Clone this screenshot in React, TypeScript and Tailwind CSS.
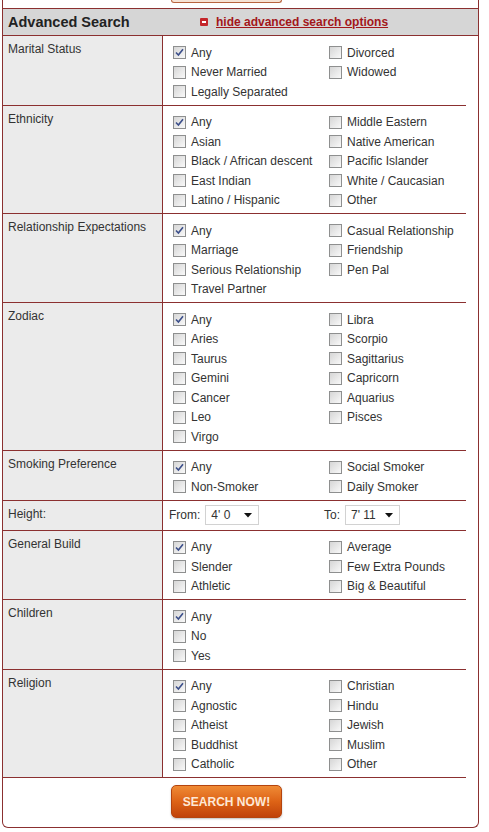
import React from 'react'

// options listed in visual order: left column first, then right column
const rows: { label: string; left: string[]; right: string[] }[] = [
  { label: 'Marital Status', left: ['Any', 'Never Married', 'Legally Separated'], right: ['Divorced', 'Widowed'] },
  {
    label: 'Ethnicity',
    left: ['Any', 'Asian', 'Black / African descent', 'East Indian', 'Latino / Hispanic'],
    right: ['Middle Eastern', 'Native American', 'Pacific Islander', 'White / Caucasian', 'Other'],
  },
  {
    label: 'Relationship Expectations',
    left: ['Any', 'Marriage', 'Serious Relationship', 'Travel Partner'],
    right: ['Casual Relationship', 'Friendship', 'Pen Pal'],
  },
  {
    label: 'Zodiac',
    left: ['Any', 'Aries', 'Taurus', 'Gemini', 'Cancer', 'Leo', 'Virgo'],
    right: ['Libra', 'Scorpio', 'Sagittarius', 'Capricorn', 'Aquarius', 'Pisces'],
  },
  { label: 'Smoking Preference', left: ['Any', 'Non-Smoker'], right: ['Social Smoker', 'Daily Smoker'] },
]

const rows2: { label: string; left: string[]; right: string[] }[] = [
  { label: 'General Build', left: ['Any', 'Slender', 'Athletic'], right: ['Average', 'Few Extra Pounds', 'Big & Beautiful'] },
  { label: 'Children', left: ['Any', 'No', 'Yes'], right: [] },
  {
    label: 'Religion',
    left: ['Any', 'Agnostic', 'Atheist', 'Buddhist', 'Catholic'],
    right: ['Christian', 'Hindu', 'Jewish', 'Muslim', 'Other'],
  },
]

function Checkbox({ checked }: { checked?: boolean }) {
  return (
    <span className="relative flex h-[13px] w-[13px] shrink-0 items-center justify-center border border-[#8e8f8f] bg-gradient-to-br from-[#d6d6d6] to-[#f9f9f9]">
      {checked && (
        <svg width="9" height="9" viewBox="0 0 9 9" className="block">
          <path d="M1 4.5 L3.4 7 L8 1.2" fill="none" stroke="#3c4f8a" strokeWidth="1.6" />
        </svg>
      )}
    </span>
  )
}

function Option({ text }: { text: string }) {
  return (
    <div className="flex h-[19.5px] items-center gap-[5px]">
      <Checkbox checked={text === 'Any'} />
      <span className="whitespace-nowrap">{text}</span>
    </div>
  )
}

function OptionRow({ label, left, right }: { label: string; left: string[]; right: string[] }) {
  return (
    <div className="flex border-b border-[#8b3030]">
      <div className="w-[160px] shrink-0 border-r border-[#8b3030] bg-[#ebebeb] pl-[5px] pt-[6px]">{label}</div>
      <div className="grid flex-1 grid-cols-[156px_1fr] pb-[3px] pl-[10px] pt-[7px]">
        <div>
          {left.map((o) => (
            <Option key={o} text={o} />
          ))}
        </div>
        <div>
          {right.map((o) => (
            <Option key={o} text={o} />
          ))}
        </div>
      </div>
    </div>
  )
}

function Select({ value, width }: { value: string; width: string }) {
  return (
    <div className={`flex h-[20px] items-center justify-between border border-[#d2d2d2] bg-white pl-[5px] pr-[6px] ${width}`}>
      <span>{value}</span>
      <svg width="8" height="5" viewBox="0 0 8 5">
        <path d="M0 0 H8 L4 4.5 Z" fill="#111" />
      </svg>
    </div>
  )
}

export default function App() {
  return (
    <div className="min-h-[832px] w-[489px] bg-white font-['Liberation_Sans',Arial,sans-serif] text-[12px] leading-[14px] text-[#333]">
      <div className="ml-[2px] w-[477px] rounded-b-[6px] border-x border-b border-[#8b3030] pb-[9px]">
        {/* bottom of the button above */}
        <div className="ml-[168px] h-[3px] w-[111px] rounded-b-[4px] border-x border-b border-[#b8643f] bg-[#f6e2d4]" />
        <div className="mt-[5px] grid h-[28px] grid-cols-[197px_1fr] items-center border-y border-[#8b3030] bg-[#d6d6d6]">
          <span className="pl-[5px] text-[14.5px] font-bold text-[#222]">Advanced Search</span>
          <a href="#" className="flex items-center gap-[8px] text-[12px] font-bold text-[#a3161a] underline">
            <span className="flex h-[8px] w-[8px] items-center justify-center rounded-[1px] bg-[#c4262b]">
              <span className="h-[2px] w-[4px] bg-white" />
            </span>
            hide advanced search options
          </a>
        </div>

        <div className="w-[463px]">
          {rows.map((r) => (
            <OptionRow key={r.label} {...r} />
          ))}

          <div className="flex h-[30px] border-b border-[#8b3030]">
            <div className="w-[160px] shrink-0 border-r border-[#8b3030] bg-[#ebebeb] pl-[5px] pt-[6px]">Height:</div>
            <div className="grid flex-1 grid-cols-[155px_1fr] items-center pl-[6px]">
              <div className="flex items-center gap-[5px]">
                <span>From:</span>
                <Select value="4' 0" width="w-[54px]" />
              </div>
              <div className="flex items-center gap-[5px]">
                <span>To:</span>
                <Select value="7' 11" width="w-[55px]" />
              </div>
            </div>
          </div>

          {rows2.map((r) => (
            <OptionRow key={r.label} {...r} />
          ))}
        </div>

        <button className="ml-[168px] mt-[7px] flex h-[33px] w-[111px] items-center justify-center rounded-[5px] border border-[#b4440e] bg-gradient-to-b from-[#ef8a34] via-[#dd6316] to-[#c0420a] text-[12px] font-bold text-[#fde8d6] shadow-[0_1px_2px_rgba(0,0,0,0.25)]">
          SEARCH NOW!
        </button>
      </div>
    </div>
  )
}
